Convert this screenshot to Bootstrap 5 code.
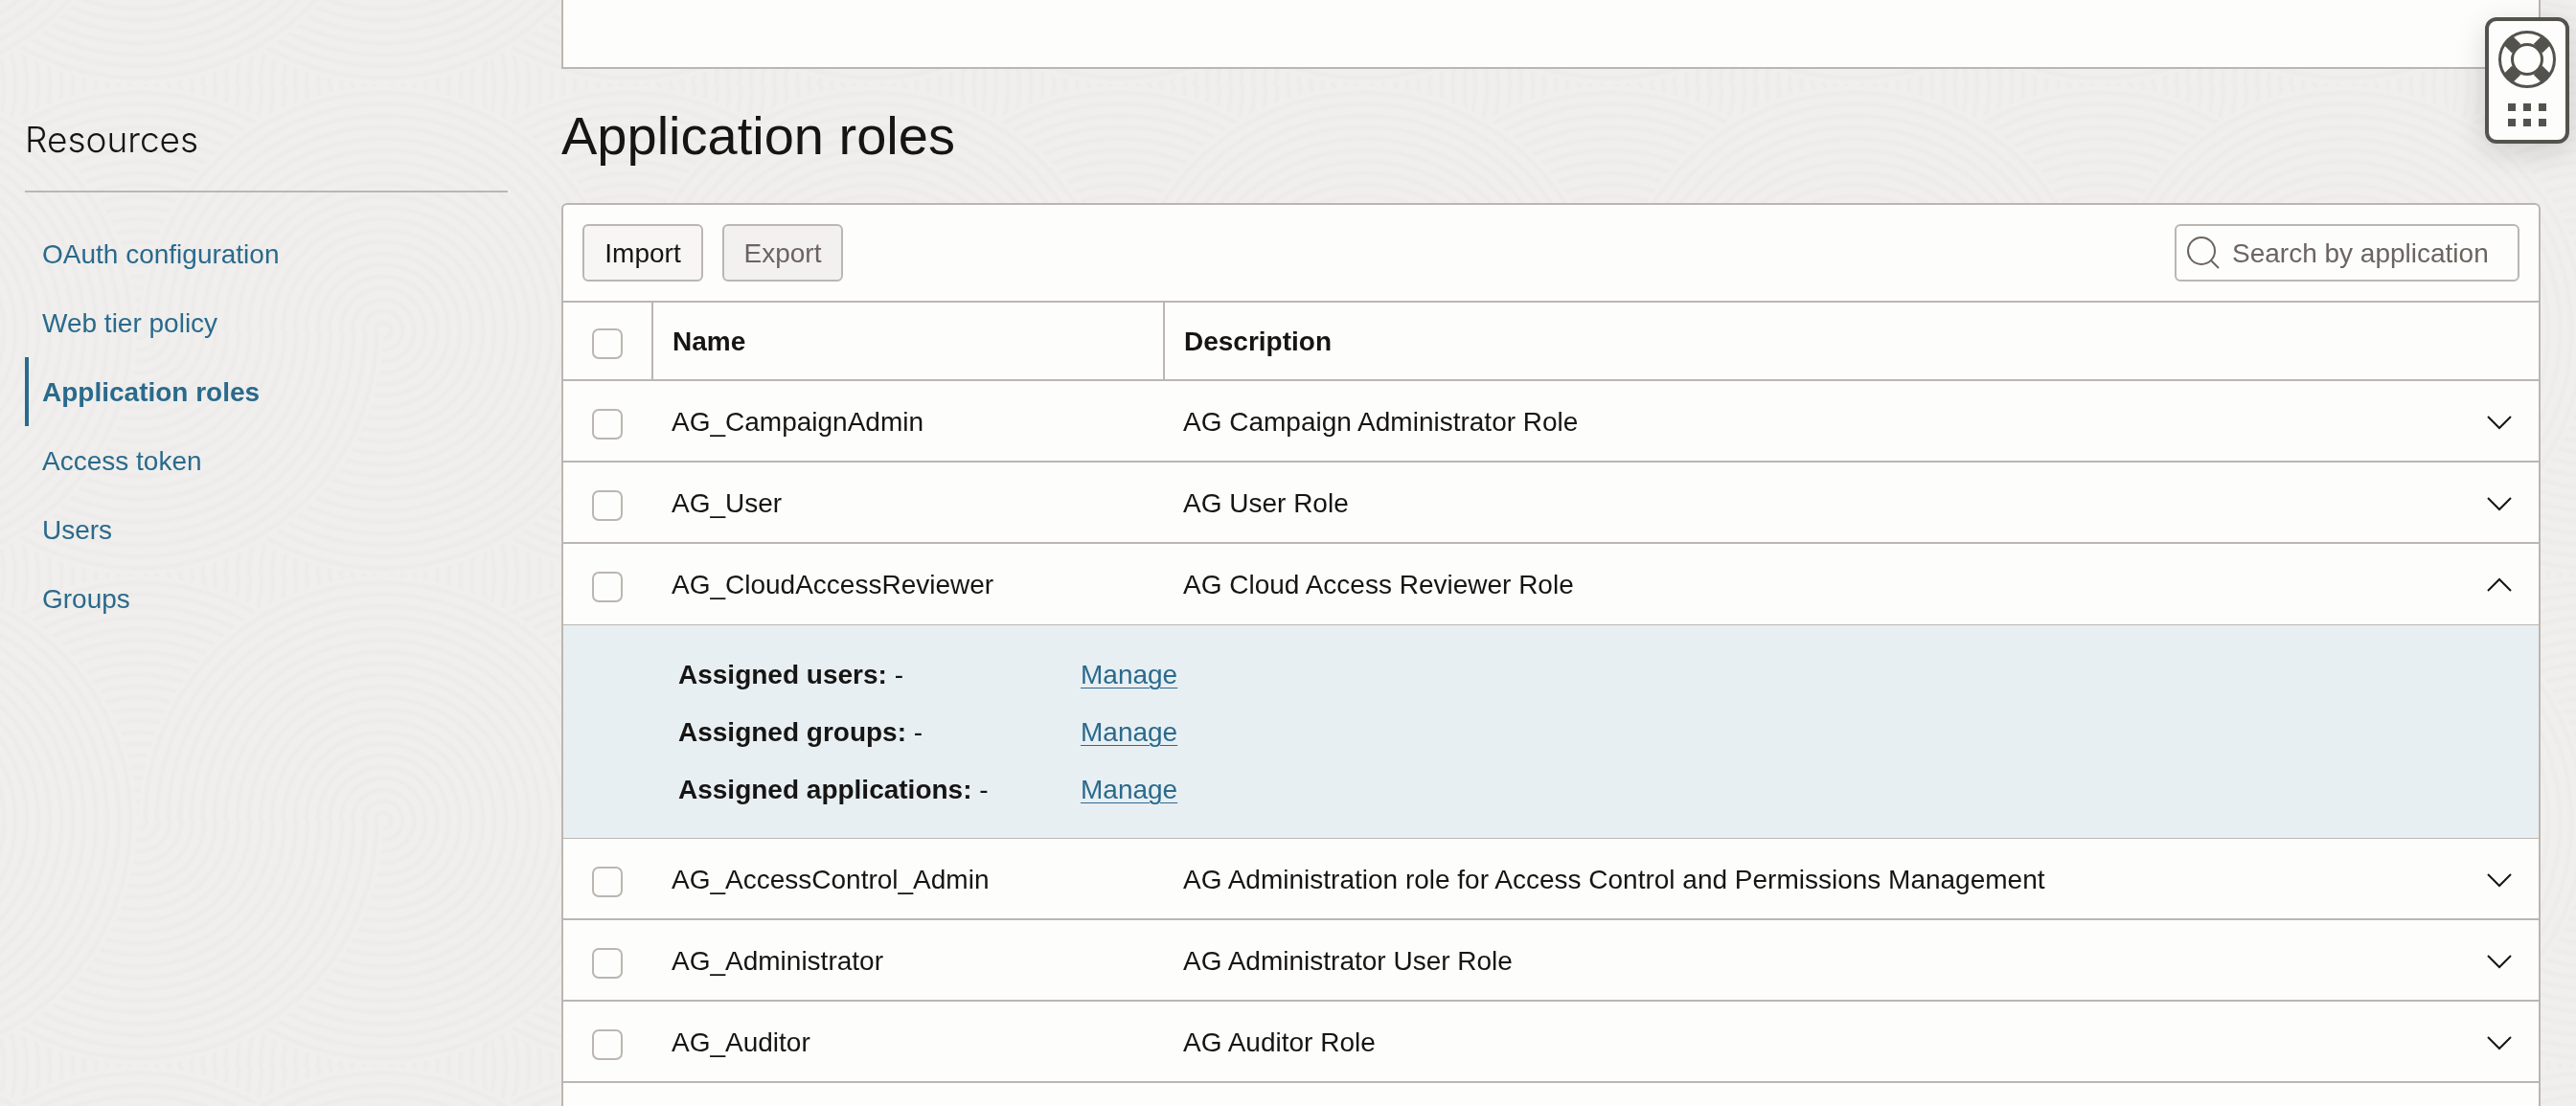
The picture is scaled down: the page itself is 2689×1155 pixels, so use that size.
<!DOCTYPE html>
<html lang="en">
<head>
<meta charset="utf-8">
<meta name="viewport" content="width=device-width, initial-scale=1">
<title>Application roles</title>
<link href="https://cdn.jsdelivr.net/npm/bootstrap@5.3.0/dist/css/bootstrap.min.css" rel="stylesheet">
<style>
:root { --line: #bbb6b1; --ink: #161513; --link: #2a6a8c; --paper: #fdfdfb; --muted-ink: #6b6460; }
body { font-family: "Liberation Sans", Arial, sans-serif; font-size: 28px; line-height: 40px; color: var(--ink); background: #f0efed; }
.page-shell { height: 100vh; padding: 0 37px 0 26px; gap: 56px; }
.backdrop { z-index: -1; }

/* Sidebar */
.side-panel { flex: 0 0 504px; }
.side-title { font-family: Inter, "Liberation Sans", sans-serif; font-weight: 300; font-size: 37px; line-height: 48px; padding: 122px 0 29px; border-bottom: 2px solid #b9b8b1; margin: 0 0 28px; }
.side-nav .nav-link { color: var(--link); padding: 17px 0 15px 14px; border-left: 4px solid transparent; }
.side-nav .nav-link.active { font-weight: 700; border-left-color: var(--link); }

/* Main column */
.panel-box { background: var(--paper); border: 2px solid var(--line); }
.panel-above { height: 72px; flex: none; }
.page-title { font-size: 56px; font-weight: 400; line-height: 64px; padding: 38px 0; margin: 0; }
.roles-box { border-radius: 6px 6px 0 0; }
.tool-row { padding: 20px; gap: 20px; border-bottom: 2px solid var(--line); }
.tool-btn { height: 60px; min-width: 126px; padding: 2px 20px 0; font-size: 28px; line-height: 40px; color: var(--ink); background: #f7f6f5; border: 2px solid var(--line); border-radius: 6px; }
.tool-btn:disabled { color: var(--muted-ink); background: #f3f1f0; border-color: var(--line); opacity: 1; }
.search-box { width: 360px; height: 60px; padding: 0 10px; gap: 12px; color: var(--muted-ink); border: 2px solid var(--line); border-radius: 6px; }
.search-box input { min-width: 0; padding: 2px 0 0; font-size: 28px; line-height: 40px; }
.search-box input::placeholder { color: var(--muted-ink); opacity: 1; }

/* Roles table */
.roles-grid { table-layout: fixed; border-collapse: separate; border-spacing: 0; width: 100%; }
.roles-grid th, .roles-grid td { height: 85px; padding: 2px 20px 0 19px; border-bottom: 2px solid var(--line); vertical-align: middle; }
.roles-grid thead th { height: 82px; padding-left: 20px; }
.roles-grid .ruled { border-right: 2px solid var(--line); }
.roles-grid .pick-cell { padding: 6px 0 0 30px; }
.roles-grid .open-row td { border-bottom-width: 1px; }
.roles-grid .fold-cell { padding: 2px 20px 0 0; }
.pick { display: block; width: 32px; height: 32px; margin: 0; background-color: var(--paper); border: 2px solid var(--line); border-radius: 6px; }
.fold-btn { color: var(--ink); padding: 8px; }
.roles-grid .detail-row td { height: 223px; padding: 22px 0 20px 120px; border-bottom-width: 1px; background: #e8eff3; }
.detail-line { line-height: 60px; }
.detail-label { width: 420px; }
.detail-line a { color: var(--link); text-decoration-thickness: 1px; text-underline-offset: 4px; }

/* Floating help */
.help-widget { top: 18px; right: 7px; width: 88px; height: 132px; background: var(--paper); border: 4px solid #53524d; border-radius: 12px; color: #53524d; box-shadow: 0 8px 32px rgba(0, 0, 0, .14); }
</style>
<script src="https://cdn.jsdelivr.net/npm/bootstrap@5.3.0/dist/js/bootstrap.bundle.min.js"></script>
</head>
<body class="overflow-hidden">

<!-- Backdrop of overlapping ripples -->
<svg class="backdrop position-fixed top-0 start-0 w-100 h-100" aria-hidden="true">
  <defs>
    <radialGradient id="ripple" gradientUnits="userSpaceOnUse" cx="0" cy="0" r="12" spreadMethod="repeat">
      <stop offset="0" stop-color="#f0efed"/><stop offset=".35" stop-color="#f0efed"/>
      <stop offset=".7" stop-color="#ecebe9"/><stop offset="1" stop-color="#f0efed"/>
    </radialGradient>
    <circle id="disc" r="255" fill="url(#ripple)"/>
    <path id="cap" d="M-255 0A255 255 0 0 1 255 0Z" fill="url(#ripple)"/>
    <g id="under">
      <use href="#disc" x="400" y="90"/>
      <use href="#disc" x="145" y="90"/>
      <use href="#cap" x="400" y="90"/>
    </g>
    <g id="over">
      <use href="#disc" x="400" y="345"/>
      <use href="#disc" x="145" y="345"/>
      <use href="#cap" x="400" y="345"/>
    </g>
    <pattern id="ripples" width="512" height="512" patternUnits="userSpaceOnUse">
      <use href="#under"/><use href="#under" x="-512"/><use href="#under" x="512"/>
      <use href="#under" y="512"/><use href="#under" x="-512" y="512"/><use href="#under" x="512" y="512"/>
      <use href="#over" y="-512"/><use href="#over" x="-512" y="-512"/>
      <use href="#over" x="512"/><use href="#over"/><use href="#over" x="-512"/>
    </pattern>
  </defs>
  <rect width="100%" height="100%" fill="url(#ripples)"/>
</svg>

<div class="page-shell d-flex">
  <aside class="side-panel">
    <h2 class="side-title">Resources</h2>
    <nav class="side-nav nav flex-column" aria-label="Resources">
      <a class="nav-link" href="#">OAuth configuration</a>
      <a class="nav-link" href="#">Web tier policy</a>
      <a class="nav-link active" aria-current="page" href="#">Application roles</a>
      <a class="nav-link" href="#">Access token</a>
      <a class="nav-link" href="#">Users</a>
      <a class="nav-link" href="#">Groups</a>
    </nav>
  </aside>

  <main class="d-flex flex-column flex-grow-1">
    <div class="panel-box panel-above border-top-0"></div>
    <h1 class="page-title">Application roles</h1>

    <section class="panel-box roles-box border-bottom-0 flex-grow-1">
      <div class="tool-row d-flex align-items-center">
        <button type="button" class="btn tool-btn">Import</button>
        <button type="button" class="btn tool-btn" disabled>Export</button>
        <label class="search-box d-flex align-items-center ms-auto">
          <svg width="36" height="36" viewBox="0 0 36 36" fill="none" stroke="currentColor" stroke-width="2" class="flex-shrink-0" aria-hidden="true"><circle cx="16" cy="16" r="14"/><path d="M26 26l8 8"/></svg>
          <input type="text" class="border-0 bg-transparent w-100" placeholder="Search by application" aria-label="Search by application">
        </label>
      </div>

      <table class="roles-grid">
        <colgroup><col style="width:94px"><col style="width:534px"><col><col style="width:80px"></colgroup>
        <thead>
          <tr>
            <th class="ruled pick-cell"><input type="checkbox" class="form-check-input pick" aria-label="Select all"></th>
            <th class="ruled" scope="col">Name</th>
            <th colspan="2" scope="col">Description</th>
          </tr>
        </thead>
        <tbody>
          <tr>
            <td class="pick-cell"><input type="checkbox" class="form-check-input pick" aria-label="Select AG_CampaignAdmin"></td>
            <td>AG_CampaignAdmin</td><td>AG Campaign Administrator Role</td>
            <td class="fold-cell"><button type="button" class="btn fold-btn border-0 d-flex ms-auto" aria-label="Expand"><svg width="26" height="16" viewBox="0 0 26 16" fill="none" stroke="currentColor" stroke-width="2"><path d="M1 2l12 12L25 2"/></svg></button></td>
          </tr>
          <tr>
            <td class="pick-cell"><input type="checkbox" class="form-check-input pick" aria-label="Select AG_User"></td>
            <td>AG_User</td><td>AG User Role</td>
            <td class="fold-cell"><button type="button" class="btn fold-btn border-0 d-flex ms-auto" aria-label="Expand"><svg width="26" height="16" viewBox="0 0 26 16" fill="none" stroke="currentColor" stroke-width="2"><path d="M1 2l12 12L25 2"/></svg></button></td>
          </tr>
          <tr class="open-row">
            <td class="pick-cell"><input type="checkbox" class="form-check-input pick" aria-label="Select AG_CloudAccessReviewer"></td>
            <td>AG_CloudAccessReviewer</td><td>AG Cloud Access Reviewer Role</td>
            <td class="fold-cell"><button type="button" class="btn fold-btn border-0 d-flex ms-auto" aria-label="Collapse"><svg width="26" height="16" viewBox="0 0 26 16" fill="none" stroke="currentColor" stroke-width="2"><path d="M1 14L13 2l12 12"/></svg></button></td>
          </tr>
          <tr class="detail-row">
            <td colspan="4">
              <div class="detail-line d-flex"><div class="detail-label"><b>Assigned users:</b> -</div><a href="#">Manage</a></div>
              <div class="detail-line d-flex"><div class="detail-label"><b>Assigned groups:</b> -</div><a href="#">Manage</a></div>
              <div class="detail-line d-flex"><div class="detail-label"><b>Assigned applications:</b> -</div><a href="#">Manage</a></div>
            </td>
          </tr>
          <tr>
            <td class="pick-cell"><input type="checkbox" class="form-check-input pick" aria-label="Select AG_AccessControl_Admin"></td>
            <td>AG_AccessControl_Admin</td><td>AG Administration role for Access Control and Permissions Management</td>
            <td class="fold-cell"><button type="button" class="btn fold-btn border-0 d-flex ms-auto" aria-label="Expand"><svg width="26" height="16" viewBox="0 0 26 16" fill="none" stroke="currentColor" stroke-width="2"><path d="M1 2l12 12L25 2"/></svg></button></td>
          </tr>
          <tr>
            <td class="pick-cell"><input type="checkbox" class="form-check-input pick" aria-label="Select AG_Administrator"></td>
            <td>AG_Administrator</td><td>AG Administrator User Role</td>
            <td class="fold-cell"><button type="button" class="btn fold-btn border-0 d-flex ms-auto" aria-label="Expand"><svg width="26" height="16" viewBox="0 0 26 16" fill="none" stroke="currentColor" stroke-width="2"><path d="M1 2l12 12L25 2"/></svg></button></td>
          </tr>
          <tr>
            <td class="pick-cell"><input type="checkbox" class="form-check-input pick" aria-label="Select AG_Auditor"></td>
            <td>AG_Auditor</td><td>AG Auditor Role</td>
            <td class="fold-cell"><button type="button" class="btn fold-btn border-0 d-flex ms-auto" aria-label="Expand"><svg width="26" height="16" viewBox="0 0 26 16" fill="none" stroke="currentColor" stroke-width="2"><path d="M1 2l12 12L25 2"/></svg></button></td>
          </tr>
        </tbody>
      </table>
    </section>
  </main>
</div>

<button type="button" class="help-widget position-fixed p-0" aria-label="Help">
  <svg class="d-block" width="80" height="124" viewBox="0 0 80 124" fill="none" stroke="currentColor" stroke-width="3" aria-hidden="true">
    <path stroke-width="13" d="M28.700 28.700L20.600 20.600M51.300 28.700L59.400 20.600M28.700 51.300L20.600 59.400M51.300 51.300L59.400 59.400"/>
    <circle cx="40" cy="40" r="28.500"/><circle cx="40" cy="40" r="15.500"/>
    <path stroke="none" fill="currentColor" d="M20 86h8v8h-8zM36 86h8v8h-8zM52 86h8v8h-8zM20 102h8v8h-8zM36 102h8v8h-8zM52 102h8v8h-8z"/>
  </svg>
</button>
</body>
</html>
